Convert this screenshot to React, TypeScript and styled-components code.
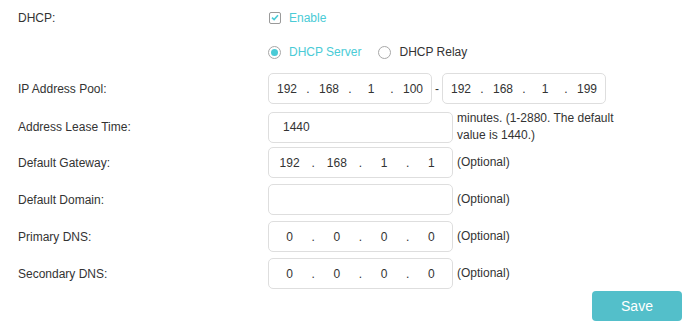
import React from "react";
import styled, { createGlobalStyle } from "styled-components";

const GlobalStyle = createGlobalStyle`
  html, body {
    margin: 0;
    padding: 0;
    background: #ffffff;
  }
  body {
    font-family: "Liberation Sans", Arial, sans-serif;
    font-size: 12px;
    color: #333333;
  }
`;

const Form = styled.div`
  display: flex;
  flex-direction: column;
  padding: 0 13px 0 18px;
  width: 695px;
  box-sizing: border-box;
`;

const Row = styled.div<{ $h: number; $mt?: number }>`
  display: grid;
  grid-template-columns: 250px 1fr;
  align-items: center;
  height: ${(p) => p.$h}px;
  margin-top: ${(p) => p.$mt ?? 0}px;
`;

const Label = styled.div`
  font-size: 12px;
  color: #333;
  line-height: 16px;
`;

const Field = styled.div`
  display: flex;
  align-items: center;
`;

const Option = styled.label<{ $active?: boolean }>`
  display: inline-flex;
  align-items: center;
  gap: 8px;
  margin-right: 17px;
  color: ${(p) => (p.$active ? "#4acbd6" : "#333")};
  font-size: 12px;
  cursor: pointer;
`;

const Indicator = styled.span`
  width: 13px;
  height: 13px;
  display: inline-flex;
  align-items: center;
  justify-content: center;
`;

const CheckBox = styled.span`
  width: 10px;
  height: 10px;
  border: 1px solid #9a9a9a;
  border-radius: 2px;
  display: inline-flex;
  align-items: center;
  justify-content: center;
  background: #fff;
`;

const RadioRing = styled.span`
  width: 11px;
  height: 11px;
  border: 1px solid #a8a8a8;
  border-radius: 50%;
  display: inline-flex;
  align-items: center;
  justify-content: center;
  background: #fff;
`;

const RadioDot = styled.span`
  width: 7px;
  height: 7px;
  border-radius: 50%;
  background: #4acbd6;
`;

const Box = styled.div<{ $w: number }>`
  width: ${(p) => p.$w}px;
  height: 31px;
  box-sizing: border-box;
  border: 1px solid #dedede;
  border-radius: 5px;
  background: #fff;
  display: flex;
  align-items: center;
  color: #333;
  font-size: 12px;
`;

const TextBox = styled(Box)`
  padding-left: 14px;
`;

const IpBox = styled(Box)`
  padding: 0 2px;
`;

const Seg = styled.span`
  flex: 1;
  text-align: center;
`;

const Dot = styled.span`
  width: 10px;
  text-align: center;
`;

const Dash = styled.span`
  width: 10px;
  text-align: center;
  color: #333;
`;

const Note = styled.div`
  margin-left: 4px;
  max-width: 175px;
  line-height: 17px;
  color: #333;
  font-size: 12px;
`;

const ButtonRow = styled.div`
  display: flex;
  justify-content: flex-end;
  margin-top: 2px;
`;

const SaveButton = styled.button`
  width: 90px;
  height: 30px;
  border: none;
  border-radius: 4px;
  background: #53bfca;
  color: #fff;
  font-family: "Liberation Sans", Arial, sans-serif;
  font-size: 14px;
  cursor: pointer;
`;

const IpInput: React.FC<{ value: string[]; width: number }> = ({ value, width }) => (
  <IpBox $w={width}>
    {value.map((v, i) => (
      <React.Fragment key={i}>
        {i > 0 && <Dot>.</Dot>}
        <Seg>{v}</Seg>
      </React.Fragment>
    ))}
  </IpBox>
);

export default function App() {
  return (
    <>
      <GlobalStyle />
      <Form>
        <Row $h={35}>
          <Label>DHCP:</Label>
          <Field>
            <Option $active>
              <Indicator>
                <CheckBox>
                  <svg width="8" height="7" viewBox="0 0 8 7">
                    <path d="M1 3.6 L3.1 5.6 L7 1.2" fill="none" stroke="#4acbd6" strokeWidth="1.6" />
                  </svg>
                </CheckBox>
              </Indicator>
              Enable
            </Option>
          </Field>
        </Row>
        <Row $h={34}>
          <Label />
          <Field>
            <Option $active>
              <Indicator>
                <RadioRing>
                  <RadioDot />
                </RadioRing>
              </Indicator>
              DHCP Server
            </Option>
            <Option>
              <Indicator>
                <RadioRing />
              </Indicator>
              DHCP Relay
            </Option>
          </Field>
        </Row>
        <Row $h={31} $mt={4}>
          <Label>IP Address Pool:</Label>
          <Field>
            <IpInput width={164} value={["192", "168", "1", "100"]} />
            <Dash>-</Dash>
            <IpInput width={164} value={["192", "168", "1", "199"]} />
          </Field>
        </Row>
        <Row $h={31} $mt={6}>
          <Label>Address Lease Time:</Label>
          <Field>
            <TextBox $w={185}>1440</TextBox>
            <Note>minutes. (1-2880. The default value is 1440.)</Note>
          </Field>
        </Row>
        <Row $h={31} $mt={6}>
          <Label>Default Gateway:</Label>
          <Field>
            <IpInput width={185} value={["192", "168", "1", "1"]} />
            <Note>(Optional)</Note>
          </Field>
        </Row>
        <Row $h={31} $mt={6}>
          <Label>Default Domain:</Label>
          <Field>
            <TextBox $w={185} />
            <Note>(Optional)</Note>
          </Field>
        </Row>
        <Row $h={31} $mt={6}>
          <Label>Primary DNS:</Label>
          <Field>
            <IpInput width={185} value={["0", "0", "0", "0"]} />
            <Note>(Optional)</Note>
          </Field>
        </Row>
        <Row $h={31} $mt={6}>
          <Label>Secondary DNS:</Label>
          <Field>
            <IpInput width={185} value={["0", "0", "0", "0"]} />
            <Note>(Optional)</Note>
          </Field>
        </Row>
        <ButtonRow>
          <SaveButton>Save</SaveButton>
        </ButtonRow>
      </Form>
    </>
  );
}
